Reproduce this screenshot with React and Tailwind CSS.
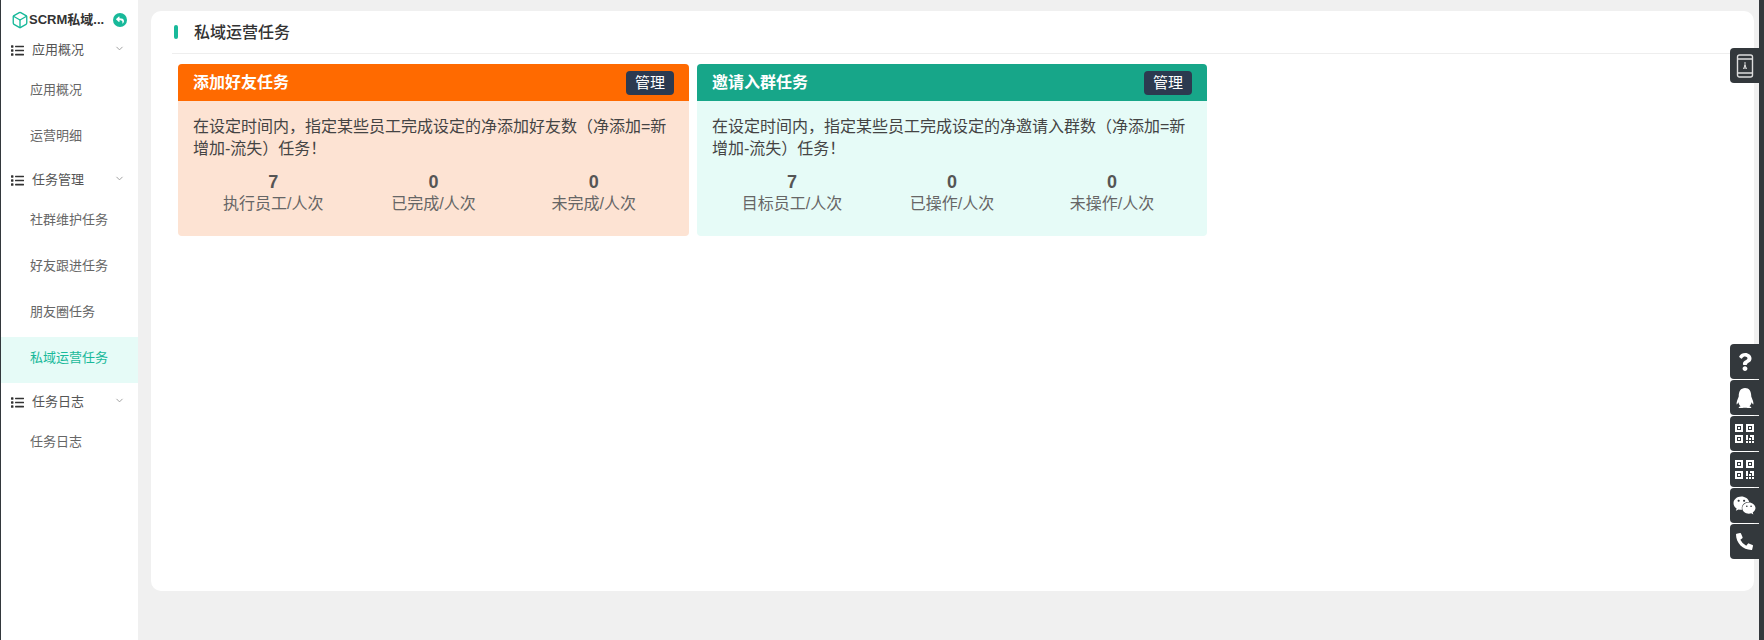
import { Box, ChevronDown } from "lucide-react";
import { FaList, FaPhoneAlt, FaQq, FaQuestion, FaReply, FaWeixin } from "react-icons/fa";

const font = "font-['Liberation_Sans','Noto_Sans_CJK_SC',sans-serif]";

const menu = [
  { title: "应用概况", items: ["应用概况", "运营明细"] },
  { title: "任务管理", items: ["社群维护任务", "好友跟进任务", "朋友圈任务", "私域运营任务"] },
  { title: "任务日志", items: ["任务日志"] },
];

const tasks = [
  {
    title: "添加好友任务",
    width: "w-[511px]",
    head: "bg-[#ff6a00]",
    body: "bg-[#fde3d3]",
    text: "在设定时间内，指定某些员工完成设定的净添加好友数（净添加=新增加-流失）任务！",
    stats: [
      ["7", "执行员工/人次"],
      ["0", "已完成/人次"],
      ["0", "未完成/人次"],
    ],
  },
  {
    title: "邀请入群任务",
    width: "w-[510px]",
    head: "bg-[#17a689]",
    body: "bg-[#e6fbf7]",
    text: "在设定时间内，指定某些员工完成设定的净邀请入群数（净添加=新增加-流失）任务！",
    stats: [
      ["7", "目标员工/人次"],
      ["0", "已操作/人次"],
      ["0", "未操作/人次"],
    ],
  },
];

function PhoneIcon() {
  return (
    <svg width="18" height="24" viewBox="0 0 18 24" fill="none" stroke="currentColor" strokeWidth="1.4">
      <rect x="1.5" y="1" width="15" height="22" rx="2" />
      <path d="M2 5h14M2 19h14" />
      <path d="M9 8v7M7.5 15l1.5-4 1.5 4" strokeWidth="1" />
    </svg>
  );
}

function QrIcon() {
  return (
    <svg width="19" height="19" viewBox="0 0 19 19" fill="currentColor">
      <path
        fillRule="evenodd"
        d="M0 0h8v8H0zM2 2v4h4V2zM11 0h8v8h-8zM13 2v4h4V2zM0 11h8v8H0zM2 13v4h4v-4z"
      />
      <path d="M3 3h2v2H3zM14 3h2v2h-2zM3 14h2v2H3z" />
      <path d="M11 11h2v5h-2zM15 11h4v5h-2v-3h-2zM11 17h2v2h-2zM14 17h2v2h-2zM17 17h2v2h-2zM14 14h2v2h-2z" />
    </svg>
  );
}

const floatIcons = [
  <FaQuestion size={18} />,
  <FaQq size={20} />,
  <QrIcon />,
  <QrIcon />,
  <FaWeixin size={23} />,
  <FaPhoneAlt size={17} />,
];

function Sidebar() {
  return (
    <aside className="w-[137px] shrink-0 bg-white">
      <div className="h-[31px] pt-[9px] pl-[10px] pr-[11px] flex items-center">
        <Box size={18} strokeWidth={1.8} className="text-[#18b99a] shrink-0" />
        <span className="text-[13px] font-bold text-[#333] whitespace-nowrap w-[85px]">SCRM私域...</span>
        <span className="w-[14px] h-[14px] rounded-full bg-[#18b99a] text-white flex items-center justify-center">
          <FaReply size={8} />
        </span>
      </div>

      {menu.map((group) => (
        <div key={group.title}>
          <div className="h-[38px] pl-[10px] pr-[13px] flex items-center text-[13px] text-[#555]">
            <FaList size={13} className="text-[#333] mr-[8px]" />
            <span className="flex-1">{group.title}</span>
            <ChevronDown size={11} className="text-[#999] -mt-1" />
          </div>
          {group.items.map((item) => (
            <div
              key={item}
              className={
                "h-[46px] pl-[29px] pb-1 flex items-center text-[13px] " +
                (item === "私域运营任务" ? "bg-[#e6fbf7] text-[#18b99a]" : "text-[#666]")
              }
            >
              {item}
            </div>
          ))}
        </div>
      ))}
    </aside>
  );
}

function TaskCard({ task }) {
  return (
    <div className={"h-[172px] rounded-[4px] overflow-hidden " + task.width + " " + task.body}>
      <div className={"h-[37px] pl-[15px] pr-[15px] flex items-center justify-between " + task.head}>
        <span className="text-[16px] font-bold text-white">{task.title}</span>
        <span className="mt-px w-[48px] h-[24px] rounded-[4px] bg-[#2c3a50] text-white text-[15px] flex items-center justify-center">
          管理
        </span>
      </div>
      <div className="px-[15px] pt-[15px]">
        <p className="text-[16px] leading-[22px] text-[#444]">{task.text}</p>
        <div className="grid grid-cols-3 mt-[11px] text-center">
          {task.stats.map(([value, label]) => (
            <div key={label}>
              <div className="text-[18px] leading-[22px] font-bold text-[#555]">{value}</div>
              <div className="text-[16px] leading-[22px] text-[#666]">{label}</div>
            </div>
          ))}
        </div>
      </div>
    </div>
  );
}

export default function App() {
  return (
    <div className={"relative h-[640px] w-full overflow-hidden flex bg-[#f0f0f0] " + font}>
      <div className="w-px shrink-0 bg-[#33383c]" />
      <Sidebar />

      <main className="flex-1 pl-[13px] pr-[5px] pt-[11px] pb-[49px]">
        <div className="h-full rounded-[10px] bg-white">
          <div className="h-[43px] ml-[21px] flex items-center border-b border-[#eee]">
            <span className="w-[4px] h-[14px] rounded-[2px] bg-[#18b99a] ml-[2px] mr-[16px]" />
            <h1 className="text-[16px] font-medium text-[#333] mt-px">私域运营任务</h1>
          </div>
          <div className="flex gap-[8px] pl-[27px] pt-[10px]">
            {tasks.map((task) => (
              <TaskCard key={task.title} task={task} />
            ))}
          </div>
        </div>
      </main>

      <div className="w-[5px] shrink-0 bg-[#33383c]" />

      <div className="absolute right-[5px] top-[48px] w-[29px] h-[35px] rounded-l-[4px] bg-[#33383c] text-[#ddd] flex items-center justify-center">
        <PhoneIcon />
      </div>

      <div className="absolute right-[5px] top-[344px] w-[29px] flex flex-col gap-px">
        {floatIcons.map((icon, i) => (
          <div key={i} className="h-[35px] rounded-l-[4px] bg-[#33383c] text-white flex items-center justify-center">
            {icon}
          </div>
        ))}
      </div>
    </div>
  );
}
